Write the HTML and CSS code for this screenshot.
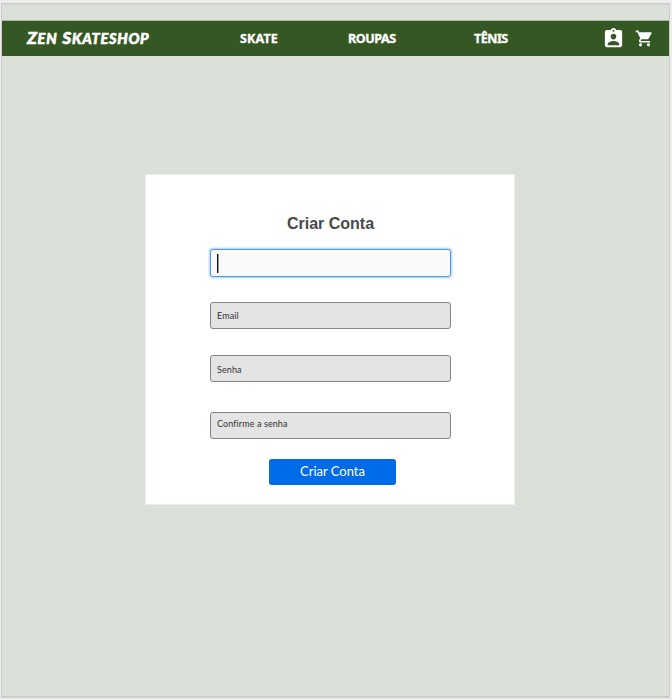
FILE: index.html
```html
<!DOCTYPE html>
<html lang="pt-BR">
<head>
<meta charset="utf-8">
<title>Zen Skateshop</title>
<link rel="stylesheet" href="styles.css">
</head>
<body>
<div class="frame">
  <header class="bar">
    <a class="logo"><span class="word">Zen</span> <span class="word">Skateshop</span></a>
    <nav class="nav">
      <a class="skate">SKATE</a>
      <a class="roupas">ROUPAS</a>
      <a class="tenis">TÊNIS</a>
    </nav>
    <div class="icons">
      <svg width="23" height="23" viewBox="0 0 24 24"><path d="M19 3h-4.180C14.400 1.840 13.300 1 12 1s-2.400.840-2.820 2H5c-1.100 0-2 .9-2 2v14c0 1.100.9 2 2 2h14c1.100 0 2-.9 2-2V5c0-1.100-.9-2-2-2zm-7 0c.55 0 1 .45 1 1s-.45 1-1 1-1-.45-1-1 .45-1 1-1zm0 4c1.660 0 3 1.340 3 3s-1.340 3-3 3-3-1.340-3-3 1.340-3 3-3zm6 12H6v-1.400c0-2 4-3.100 6-3.100s6 1.100 6 3.100V19z"/></svg>
      <svg class="cart" width="19" height="19" viewBox="0 0 24 24"><path d="M7 18c-1.100 0-1.990.9-1.990 2S5.900 22 7 22s2-.9 2-2-.9-2-2-2zM1 2v2h2l3.600 7.590-1.350 2.450c-.16.280-.25.610-.25.960 0 1.100.9 2 2 2h12v-2H7.420c-.14 0-.25-.11-.25-.25l.03-.12.900-1.630h7.450c.750 0 1.410-.41 1.750-1.030l3.580-6.490A1 1 0 0 0 20 4H5.210l-.94-2H1zm16 16c-1.100 0-1.990.9-1.990 2s.890 2 1.990 2 2-.9 2-2-.9-2-2-2z"/></svg>
    </div>
  </header>
  <main class="main">
    <form class="card">
      <h1 class="title">Criar Conta</h1>
      <div class="field focused"><span class="caret"></span></div>
      <div class="field email">Email</div>
      <div class="field senha">Senha</div>
      <div class="field confirm">Confirme a senha</div>
      <button class="submit" type="button">Criar Conta</button>
    </form>
  </main>
</div>
</body>
</html>
```
FILE: styles.css
```css
* { box-sizing: border-box; }
body {
  margin: 0;
  height: 700px;
  padding: 3px 2px 2px 1px;
  background: #ededed;
  overflow: hidden;
}
.frame {
  height: 695px;
  padding-top: 16px;
  background: #dadfd8;
  border: 1px solid #cbcccb;
  box-shadow: inset 0 1px 0 #d3d6d2, inset 0 -1px 0 #c9cdc8;
}
.bar {
  display: flex;
  align-items: center;
  height: 36px;
  padding-left: 25px;
  background: #355723;
  border-top: 1px solid #a9b8a2;
  color: #fff;
}
.logo {
  width: 213px;
  font: italic 900 14.500px/34px Lato, sans-serif;
  text-transform: uppercase;
  letter-spacing: 0.75px;
  word-spacing: 1px;
  white-space: nowrap;
  -webkit-text-stroke: 0.6px #fff;
}
.word { display: inline-block; }
.word::first-letter { font-size: 17.500px; line-height: 20px; }
.nav {
  display: flex;
  width: 362px;
  font: 700 12.500px/34px "Noto Sans", sans-serif;
}
.nav a { white-space: nowrap; -webkit-text-stroke: 0.35px #fff; }
.skate { width: 108px; letter-spacing: 0.15px; }
.roupas { width: 126px; letter-spacing: -0.4px; }
.tenis { letter-spacing: -0.5px; }
.icons {
  display: flex;
  align-items: center;
  gap: 10px;
}
.icons svg { flex: none; fill: #fff; }
.main {
  padding: 118px 0 0 143px;
}
.card {
  display: flex;
  flex-direction: column;
  width: 370px;
  height: 331px;
  padding: 39px 64px 0;
  background: #fff;
  border: 1px solid #eceeeb;
}
.title {
  margin: 0 0 15px;
  font: 700 16px/20px "Liberation Sans", Arial, sans-serif;
  text-align: center;
  text-indent: 1px;
  color: #494949;
}
.field {
  flex: none;
  width: 241px;
  height: 27px;
  padding-left: 6px;
  background: #e4e4e4;
  border: 1px solid #858585;
  border-radius: 3px;
  font: 9px/25px Lato, sans-serif;
  letter-spacing: 0.1px;
  color: #333;
}
.focused {
  height: 28px;
  padding-top: 4px;
  background: #fafafa;
  border-color: #5299f4;
  box-shadow: 0 0 2px 1px #a9cbfa;
}
.caret {
  display: block;
  width: 2px;
  height: 19px;
  background: linear-gradient(90deg, #111 50%, #999 50%);
}
.email { margin-top: 25px; }
.senha { margin-top: 26px; line-height: 27px; }
.confirm { margin-top: 30px; line-height: 21px; }
.submit {
  width: 127px;
  height: 26px;
  margin: 20px 0 0 59px;
  padding: 0 0 1px;
  border: 0;
  border-radius: 3px;
  background: #006be6;
  color: #fff;
  font: 13px/25px Lato, sans-serif;
}
```
